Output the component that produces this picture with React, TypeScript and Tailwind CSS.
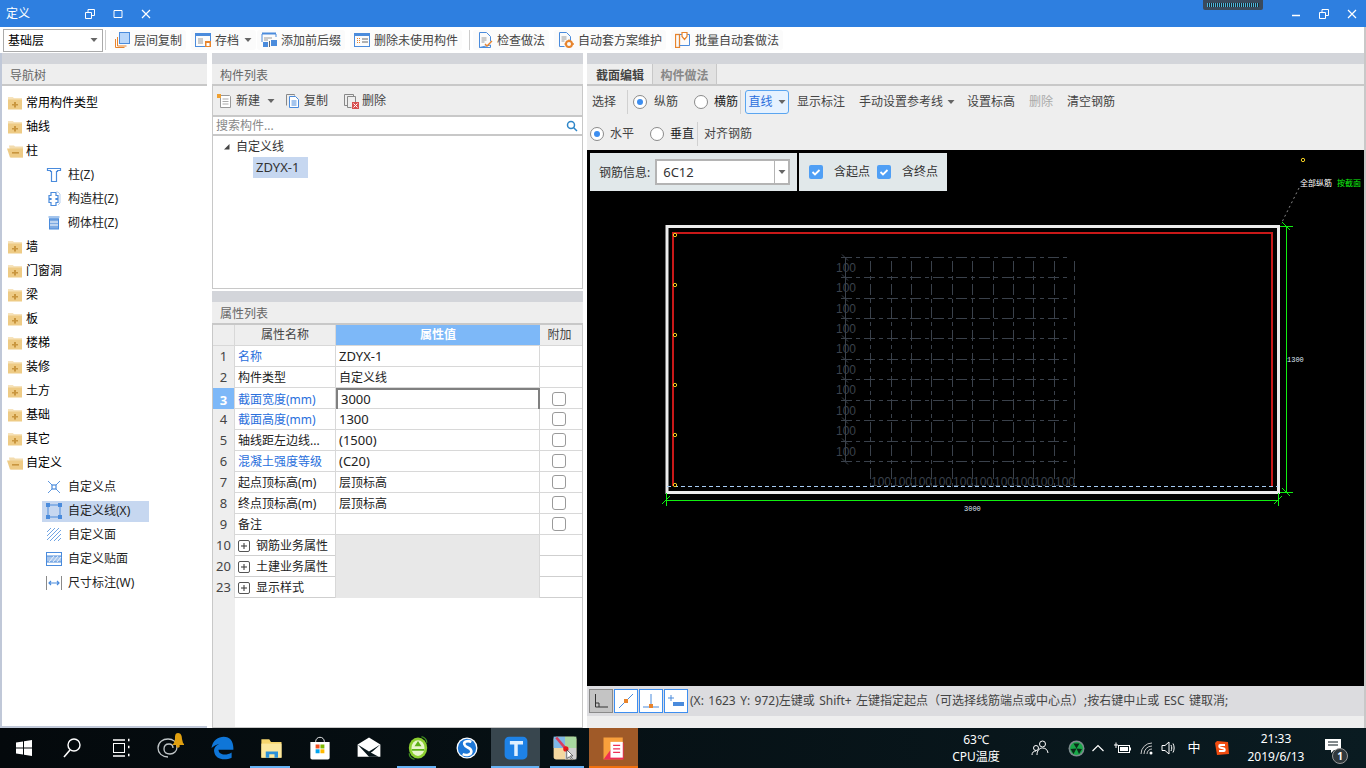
import React from 'react';

const FONT = "[font-family:'Noto_Sans','Noto_Sans_CJK_SC',sans-serif]";

// 导航树の折りたたみフォルダ
const FolderClosed = () => (
  <svg width="16" height="14" viewBox="0 0 16 14" className="shrink-0">
    <path d="M1 1.500h5l1 1h8v11H1z" fill="#eecb85" />
    <path d="M1 1.500h5l1 1h8v1H1z" fill="#f6e2b8" />
    <path d="M7 6h2v2h2v1.600H9v2H7v-2H5V8h2z" fill="#c9963f" />
  </svg>
);

const FolderOpen = () => (
  <svg width="17" height="14" viewBox="0 0 17 14" className="shrink-0">
    <path d="M2 1.500h5l1 1h8v11H4z" fill="#f3dcae" />
    <path d="M0 4.500h16v9H3z" fill="#eecb85" />
    <rect x="5" y="8" width="7" height="1.600" fill="#c9963f" />
  </svg>
);

const Sub = ({ children }: { children: React.ReactNode }) => (
  <svg width="16" height="16" viewBox="0 0 16 16" fill="none" stroke="#4a8bdc" className="shrink-0">
    {children}
  </svg>
);

const navIcons: Record<string, React.ReactNode> = {
  col: <Sub><path d="M1.500 1.500h13v2h-3v1h-1v10h-5v-10h-1v-1h-3z" strokeWidth="1.200" /></Sub>,
  gz: <Sub><path d="M5 1.500h5v3H12v3h-2v1h2v3h-2v3H5v-3H3v-3h2v-1H3v-3h2z" strokeWidth="1.200" /><path d="M10 1h2l2 2v9l-2 2" stroke="#b6d0f0" /></Sub>,
  qt: <Sub><path d="M2.500 2h11M3 4h10" strokeWidth="1.200" /><rect x="3.500" y="4" width="9" height="10" fill="#7eaae2" stroke="#4a8bdc" /><path d="M4 7h8M4 10h8" stroke="#fff" /></Sub>,
  point: <Sub><path d="M2 2l4 4M14 2l-4 4M2 14l4-4M14 14l-4-4" strokeWidth="0.900" /><rect x="6" y="6" width="4" height="4" strokeWidth="1.200" /></Sub>,
  line: <Sub><rect x="2" y="2" width="12" height="12" /><rect x="0.500" y="0.500" width="3" height="3" fill="#4a8bdc" /><rect x="12.500" y="0.500" width="3" height="3" fill="#4a8bdc" /><rect x="0.500" y="12.500" width="3" height="3" fill="#4a8bdc" /><rect x="12.500" y="12.500" width="3" height="3" fill="#4a8bdc" /></Sub>,
  face: <Sub><path d="M1 5l4-4M1 9l8-8M1 13L13 1M4 14L15 3M8 14l7-7M12 14l3-3" strokeWidth="0.800" /></Sub>,
  tie: <Sub><rect x="0.500" y="1.500" width="15" height="13" /><rect x="1" y="5" width="14" height="6" fill="#a8c6ec" stroke="none" /><path d="M0.500 5h15M0.500 11h15" /><path d="M3 11l5-6M7 11l5-6M11 11l4-5" stroke="#fff" strokeWidth="0.800" /></Sub>,
  dim: <Sub><path d="M0.500 1v14M15.500 1v14" stroke="#8a8a8a" /><path d="M3 8h10M5 6L3 8l2 2M11 6l2 2-2 2" strokeWidth="1.200" /></Sub>,
};

type NavItem = { label: string; open?: boolean; sub?: { label: string; icon: string; active?: boolean }[] };

const navTree: NavItem[] = [
  { label: '常用构件类型' },
  { label: '轴线' },
  {
    label: '柱',
    open: true,
    sub: [
      { label: '柱(Z)', icon: 'col' },
      { label: '构造柱(Z)', icon: 'gz' },
      { label: '砌体柱(Z)', icon: 'qt' },
    ],
  },
  { label: '墙' },
  { label: '门窗洞' },
  { label: '梁' },
  { label: '板' },
  { label: '楼梯' },
  { label: '装修' },
  { label: '土方' },
  { label: '基础' },
  { label: '其它' },
  {
    label: '自定义',
    open: true,
    sub: [
      { label: '自定义点', icon: 'point' },
      { label: '自定义线(X)', icon: 'line', active: true },
      { label: '自定义面', icon: 'face' },
      { label: '自定义贴面', icon: 'tie' },
      { label: '尺寸标注(W)', icon: 'dim' },
    ],
  },
];

const Arrow = () => (
  <svg width="8" height="4" viewBox="0 0 8 4" className="shrink-0">
    <path d="M0.500 0h7L4 4z" fill="#666" />
  </svg>
);

const Tb = ({ children }: { children: React.ReactNode }) => (
  <svg width="16" height="16" viewBox="0 0 16 16" fill="none" className="shrink-0">
    {children}
  </svg>
);

const toolIcons = {
  copy: <Tb><path d="M3.500 5v9h9" stroke="#e8842c" /><path d="M1.500 7v8.500h9" stroke="#e8842c" /><rect x="5.500" y="0.500" width="10" height="11" fill="#b8d6fa" stroke="#4a8bdc" /></Tb>,
  save: <Tb><rect x="0.500" y="1.500" width="15" height="13" stroke="#4a8bdc" /><rect x="1" y="2" width="14" height="2" fill="#4a8bdc" /><path d="M3 7h5M3 9h5M3 11h5" stroke="#9a9a9a" /><rect x="10" y="9" width="6" height="6" fill="#e8842c" /><rect x="11.500" y="11" width="3" height="3" fill="#fff" /></Tb>,
  prefix: <Tb><path d="M1 1.500h14" stroke="#4a8bdc" strokeWidth="2" /><path d="M1 2v8M15 2v3" stroke="#4a8bdc" /><path d="M3 6h8M3 8h4" stroke="#9a9a9a" /><rect x="2" y="10" width="5" height="5" fill="#4a8bdc" /><rect x="10" y="8" width="6" height="6" fill="#4a8bdc" /><path d="M8.500 9v6" stroke="#666" /></Tb>,
  purge: <Tb><rect x="0.500" y="1.500" width="15" height="13" stroke="#4a8bdc" /><rect x="1" y="2" width="14" height="2" fill="#4a8bdc" /><path d="M3 6h1v1H3zM5 6h1v1H5zM3 8h1v1H3zM5 8h1v1H5zM3 10h1v1H3zM5 10h1v1H5z" fill="#e8842c" /><path d="M8 7h6M8 10h6" stroke="#666" /></Tb>,
  check: <Tb><path d="M2.500 0.500h7l4 4v5M13.500 13v2.500h-11z" stroke="#4a8bdc" /><path d="M2.500 0.500v15" stroke="#4a8bdc" /><path d="M4.500 6h5M4.500 8h5M4.500 10h3" stroke="#9a9a9a" /><path d="M8 12l2 2 5-5" stroke="#e8842c" strokeWidth="1.400" /></Tb>,
  scheme: <Tb><path d="M1.500 0.500h7l4 4v5M1.500 0.500v14h5" stroke="#4a8bdc" /><path d="M3.500 5h5M3.500 7h5M3.500 9h3" stroke="#9a9a9a" /><circle cx="11" cy="12" r="3" stroke="#e8842c" strokeWidth="2" /><path d="M11 7.500v1.500M11 15v1M6.500 12h1.500M14 12h2" stroke="#e8842c" strokeWidth="1.500" /></Tb>,
  batch: <Tb><rect x="0.500" y="2.500" width="4" height="13" stroke="#e8842c" strokeWidth="1.300" /><path d="M4.500 2.500h10v11h-10" stroke="#4a8bdc" /><path d="M7 0.500h5v4l-2.500 3-2.500-3z" fill="#fff" stroke="#e8842c" strokeWidth="1.200" /></Tb>,
};

const topTools: { label: string; icon: keyof typeof toolIcons; cls: string; arrow?: boolean }[] = [
  { label: '层间复制', icon: 'copy', cls: 'ml-[4px]' },
  { label: '存档', icon: 'save', cls: 'ml-[5px]', arrow: true },
  { label: '添加前后缀', icon: 'prefix', cls: 'ml-[1px]' },
  { label: '删除未使用构件', icon: 'purge', cls: 'ml-[5px]' },
  { label: '检查做法', icon: 'check', cls: 'ml-[3px]' },
  { label: '自动套方案维护', icon: 'scheme', cls: 'ml-[5px]' },
  { label: '批量自动套做法', icon: 'batch', cls: 'ml-[5px]' },
];

const Cb = () => <span className="block h-[14px] w-[14px] rounded-[3px] border border-[#9a9a9a] bg-white" />;

const Radio = ({ on, cls }: { on?: boolean; cls: string }) => (
  <span className={`flex h-[14px] w-[14px] shrink-0 items-center justify-center rounded-full border border-[#8a8a8a] bg-white ${cls}`}>
    {on && <span className="h-[6px] w-[6px] rounded-full bg-[#3d8ef0]" />}
  </span>
);

const CheckBlue = () => (
  <svg width="14" height="14" viewBox="0 0 14 14" className="shrink-0">
    <rect width="14" height="14" rx="2" fill="#4f9ff5" />
    <path d="M3.500 7l2.500 2.500 4.500-4.500" fill="none" stroke="#fff" strokeWidth="1.800" />
  </svg>
);

const Plus = () => (
  <span className="mr-[6px] flex h-[12px] w-[12px] shrink-0 items-center justify-center rounded-[2px] border border-[#555] text-[10px] leading-none">
    <svg width="8" height="8" viewBox="0 0 8 8"><path d="M4 1v6M1 4h6" stroke="#333" /></svg>
  </span>
);

type Row = { n: number; name: string; value?: string; latin?: boolean; blue?: boolean; check?: boolean; selected?: boolean; group?: boolean };

const rows: Row[] = [
  { n: 1, name: '名称', value: 'ZDYX-1', latin: true, blue: true },
  { n: 2, name: '构件类型', value: '自定义线' },
  { n: 3, name: '截面宽度(mm)', value: '3000', latin: true, blue: true, check: true, selected: true },
  { n: 4, name: '截面高度(mm)', value: '1300', latin: true, blue: true, check: true },
  { n: 5, name: '轴线距左边线...', value: '(1500)', latin: true, check: true },
  { n: 6, name: '混凝土强度等级', value: '(C20)', latin: true, blue: true, check: true },
  { n: 7, name: '起点顶标高(m)', value: '层顶标高', check: true },
  { n: 8, name: '终点顶标高(m)', value: '层顶标高', check: true },
  { n: 9, name: '备注', check: true },
  { n: 10, name: '钢筋业务属性', group: true },
  { n: 20, name: '土建业务属性', group: true },
  { n: 23, name: '显示样式', group: true },
];

const hLines = [257.5, 277.5, 298.5, 318.5, 338.5, 359.5, 379.5, 400.5, 420.5, 441.5, 461.5];
const vLines = [870.5, 891.5, 911.5, 931.5, 952.5, 972.5, 993.5, 1013.5, 1033.5, 1054.5, 1074.5];
const pins = [235, 285, 335, 385, 435, 485];

// 断面图
const Drawing = () => (
  <svg width="777" height="536" viewBox="587 150 777 536" className="block">
    <rect x="587" y="150" width="777" height="536" fill="#000" />
    <g stroke="#3a414b" fill="none">
      {hLines.map((y) => (
        <path key={y} d={`M841 ${y}H1071`} strokeDasharray="11 4 4 4" />
      ))}
      {vLines.map((x) => (
        <path key={x} d={`M${x} 261V490`} strokeDasharray="11 4 4 4" />
      ))}
      <path d="M845.500 257V461" />
      {hLines.map((y) => (
        <path key={`t${y}`} d={`M842 ${y - 3}l6 6`} />
      ))}
    </g>
    <g fill="#3a414b" fontSize="12" fontFamily="'Liberation Sans', sans-serif">
      {hLines.slice(0, 10).map((y) => (
        <text key={y} x="836" y={y + 14}>100</text>
      ))}
      {vLines.slice(0, 10).map((x) => (
        <text key={x} x={x + 0.5} y="486">100</text>
      ))}
    </g>
    <path d="M1299 188L1281 224" stroke="#8a8a8a" strokeDasharray="2 3" />
    <rect x="667" y="226.500" width="611.500" height="266" fill="none" stroke="#ececec" strokeWidth="3" />
    <path d="M673 486V233H1272V486" fill="none" stroke="#c81818" strokeWidth="2" />
    <path d="M667 486.500H1278" stroke="#a6ccf4" strokeDasharray="4 3" />
    <g fill="none" stroke="#f5d020">
      {pins.map((y) => (
        <circle key={y} cx="675" cy={y} r="1.700" />
      ))}
      <circle cx="1303" cy="160" r="1.700" />
    </g>
    <g stroke="#10f010" fill="none">
      <path d="M666 500.500H1278M666.500 493V506M1278.500 493V506M662 504l8-8M1274 504l8-8" />
      <path d="M1286.500 226V492M1280 226.500H1293M1280 492.500H1293M1282 222l8 8M1282 488l8 8" />
    </g>
    <text x="964" y="511" fontSize="7" fill="#dfe8f4" fontFamily="'Liberation Mono', monospace">3000</text>
    <text x="1287" y="362" fontSize="7" fill="#dfe8f4" fontFamily="'Liberation Mono', monospace">1300</text>
    <text x="1300" y="186" fontSize="8" fill="#ffffff" fontFamily="'Noto Sans CJK SC', sans-serif">全部纵筋</text>
    <text x="1337" y="186" fontSize="8" fill="#10f010" fontFamily="'Noto Sans CJK SC', sans-serif">按截面</text>
  </svg>
);

const Snap = ({ children, active }: { children: React.ReactNode; active?: boolean }) => (
  <span className={`flex h-[24px] w-[24px] items-center justify-center border ${active ? 'border-[#8a8a8a] bg-[#c4c4c4]' : 'border-[#3d8ef0] bg-white'}`}>
    <svg width="18" height="18" viewBox="0 0 18 18" fill="none">{children}</svg>
  </span>
);

const TaskIcon = ({ children, cls, under, app }: { children: React.ReactNode; cls?: string; under?: string; app?: boolean }) => (
  <div className={`relative flex h-full shrink-0 items-center justify-center ${app ? 'w-[49px]' : 'w-[48px]'} ${cls ?? ''}`}>
    <svg width={app ? 28 : 32} height={app ? 28 : 32} viewBox="0 0 32 32" fill="none">{children}</svg>
    {under && <span className={`absolute bottom-0 h-[2px] ${under}`} />}
  </div>
);

const Tray = ({ children, cls }: { children: React.ReactNode; cls: string }) => (
  <div className={`flex shrink-0 items-center justify-center ${cls}`}>{children}</div>
);

const Head = ({ children }: { children: React.ReactNode }) => (
  <div className="flex h-[22px] items-center border-b-2 border-[#c8c8c8] bg-[#eee] pl-[8px] pt-[4px] text-[#666]">{children}</div>
);

export default function App() {
  return (
    <div className={`flex h-[768px] w-[1366px] flex-col overflow-hidden bg-white text-[12px] text-[#333] ${FONT}`}>
      {/* タイトルバー */}
      <div className="relative flex h-[27px] shrink-0 items-center bg-[#2e7fe0] text-white">
        <span className="ml-[6px] pt-[1px] text-[12px]">定义</span>
        <svg width="10" height="10" viewBox="0 0 10 10" fill="none" stroke="#fff" className="ml-[55px]">
          <path d="M0.500 3.500h6v6h-6zM3 3V0.500h6.500v6H7" />
        </svg>
        <svg width="10" height="10" viewBox="0 0 10 10" fill="none" stroke="#fff" className="ml-[18px]">
          <path d="M1 1.500h8v7H1z" />
        </svg>
        <svg width="10" height="10" viewBox="0 0 10 10" fill="none" stroke="#fff" className="ml-[18px]">
          <path d="M1 1l8 8M9 1l-8 8" strokeWidth="1.200" />
        </svg>
        <div className="absolute left-[1203px] top-0 flex h-[10px] w-[60px] items-center justify-center rounded-b-[2px] bg-[#3a4a5c]">
          <span className="h-[4px] w-[52px] bg-[repeating-linear-gradient(90deg,#4fb4d8_0,#4fb4d8_1px,#1c2630_1px,#1c2630_2px)]" />
        </div>
        <svg width="10" height="10" viewBox="0 0 10 10" fill="none" stroke="#fff" className="ml-auto">
          <path d="M1 6.500h8" strokeWidth="1.500" />
        </svg>
        <svg width="10" height="10" viewBox="0 0 10 10" fill="none" stroke="#fff" className="ml-[18px]">
          <path d="M0.500 3.500h6v6h-6zM3 3V0.500h6.500v6H7" />
        </svg>
        <svg width="10" height="10" viewBox="0 0 10 10" fill="none" stroke="#fff" className="ml-[18px] mr-[9px]">
          <path d="M1 1l8 8M9 1l-8 8" strokeWidth="1.200" />
        </svg>
      </div>

      {/* ツールバー */}
      <div className="flex h-[26px] shrink-0 items-center border-r-2 border-[#c8c8c8] bg-white">
        <div className="ml-[3px] flex h-[23px] w-[100px] items-center justify-between border border-[#aaa] px-[4px] text-black">
          <span className="pt-[1px]">基础层</span>
          <Arrow />
        </div>
        <span className="ml-[2px] h-[20px] w-px bg-[#ccc]" />
        {topTools.map((t, i) => (
          <React.Fragment key={t.label}>
            {i === 4 && <span className="ml-[7px] h-[20px] w-px bg-[#ccc]" />}
            <div className={`flex h-[20px] items-center gap-[4px] rounded-[3px] bg-[#fbfbfb] px-[4px] text-[#444] ${t.cls}`}>
              {toolIcons[t.icon]}
              <span className="pt-[1px]">{t.label}</span>
              {t.arrow && <span className="ml-[1px]"><Arrow /></span>}
            </div>
          </React.Fragment>
        ))}
      </div>

      <div className="flex h-[675px] shrink-0 bg-white">
        {/* 左ストリップ + 导航树 */}
        <div className="w-[2px] bg-[#c0c8d8]" />
        <div className="flex w-[205px] flex-col border-b-2 border-[#c0c8d8]">
          <div className="h-[11px] bg-[#d3d5da]" />
          <Head>导航树</Head>
          <div className="flex-1 pt-[5px] text-black">
            {navTree.map((n) => (
              <React.Fragment key={n.label}>
                <div className="flex h-[24px] items-center gap-[1px] pl-[5px]">
                  <span className="flex w-[18px]">{n.open ? <FolderOpen /> : <FolderClosed />}</span>
                  <span>{n.label}</span>
                </div>
                {n.sub?.map((s) => (
                  <div key={s.label} className="flex h-[24px] items-center pl-[40px]">
                    <div className={`flex h-[21px] items-center gap-[6px] pl-[4px] ${s.active ? 'w-[107px] bg-[#c6d7f0]' : ''}`}>
                      {navIcons[s.icon]}
                      <span className="text-[#222]">{s.label}</span>
                    </div>
                  </div>
                ))}
              </React.Fragment>
            ))}
          </div>
        </div>

        <div className="w-[5px]" />

        {/* 构件列表 / 属性列表 */}
        <div className="flex w-[371px] flex-col">
          <div className="h-[11px] bg-[#d3d5da]" />
          <Head>构件列表</Head>
          <div className="flex h-[203px] flex-col border-x border-b border-[#c8c8c8]">
            <div className="flex h-[29px] shrink-0 items-center bg-[#eee] pl-[4px] text-[#444]">
              <svg width="16" height="16" viewBox="0 0 16 16" fill="none">
                <path d="M3.500 2.500h9l1 1v11h-10z" fill="#fff" stroke="#999" />
                <path d="M5.500 6h6M5.500 8.500h6M5.500 11h6" stroke="#aaa" />
                <path d="M0 1h4v4H0z" fill="#f0a030" />
              </svg>
              <span className="ml-[3px]">新建</span>
              <span className="ml-[7px]"><Arrow /></span>
              <svg width="16" height="16" viewBox="0 0 16 16" fill="none" stroke="#4a8bdc" className="ml-[10px]">
                <path d="M1.500 1.500h8v1" stroke="#888" />
                <path d="M1.500 1.500v11" stroke="#888" />
                <path d="M4.500 3.500h6l3 3v8h-9z" fill="#fff" />
                <path d="M6.500 8h5M6.500 10h5M6.500 12h5" />
              </svg>
              <span className="ml-[3px]">复制</span>
              <svg width="16" height="16" viewBox="0 0 16 16" fill="none" stroke="#888" className="ml-[15px]">
                <path d="M1.500 1.500h9v2M1.500 1.500v11h3" />
                <path d="M4.500 3.500h8v7M4.500 3.500v11h4" />
                <rect x="9" y="9" width="7" height="7" fill="#d85050" stroke="none" />
                <path d="M10.500 10.500l4 4M14.500 10.500l-4 4" stroke="#fff" />
              </svg>
              <span className="ml-[3px]">删除</span>
            </div>
            <div className="flex h-[21px] shrink-0 items-center justify-between border-y-2 border-[#c8c8c8] bg-white pl-[3px] pr-[4px] text-[#888]">
              <span>搜索构件...</span>
              <svg width="12" height="12" viewBox="0 0 12 12" fill="none" stroke="#2e86c8" strokeWidth="1.500">
                <circle cx="5" cy="5" r="3.500" />
                <path d="M7.500 7.500l3.500 3.500" />
              </svg>
            </div>
            <div className="flex-1 text-[#333]">
              <div className="flex h-[21px] items-center pl-[10px]">
                <svg width="7" height="7" viewBox="0 0 7 7"><path d="M6.500 1v5.500H1z" fill="#444" /></svg>
                <span className="ml-[6px]">自定义线</span>
              </div>
              <div className="ml-[40px] flex h-[21px] w-[55px] items-center bg-[#c6d7f0] pl-[3px] text-[13px]">ZDYX-1</div>
            </div>
          </div>
          <div className="mt-[2px] h-[11px] bg-[#d3d5da]" />
          <div className="flex h-[23px] items-center border-b-2 border-[#c8c8c8] bg-[#eee] pl-[8px] pt-[3px] text-[#666]">属性列表</div>
          <div className="flex h-[403px] flex-col border border-t-0 border-[#c8c8c8]">
            <div className="grid h-[21px] shrink-0 grid-cols-[22px_101px_204px_41px] border-b border-[#d8d8d8] bg-[#eee] text-[#444]">
              <span className="border-r border-[#d8d8d8]" />
              <span className="flex items-center justify-center border-r border-[#d8d8d8]">属性名称</span>
              <span className="flex items-center justify-center bg-[#7db8f8] font-bold text-white">属性值</span>
              <span className="flex items-center justify-center pr-[2px]">附加</span>
            </div>
            {rows.map((r) => (
              <div key={r.n} className={`grid h-[21px] shrink-0 grid-cols-[22px_101px_204px_41px] border-b bg-white text-[#222] ${r.group ? 'border-[#cfcfcf]' : 'border-[#d8d8d8]'}`}>
                <span className={`flex items-center justify-center border-r border-[#d8d8d8] pt-px text-[13px] ${r.selected ? 'bg-[#7db8f8] font-bold text-white' : 'bg-[#eee] text-[#444]'}`}>{r.n}</span>
                <span className={`flex items-center whitespace-nowrap border-r border-[#d8d8d8] pl-[3px] pt-px ${r.blue ? 'text-[#2a6fdc]' : ''}`}>
                  {r.group && <Plus />}
                  {r.name}
                </span>
                <span className={`flex items-center pl-[3px] ${r.latin ? 'text-[13px]' : ''} ${r.group ? 'bg-[#e8e8e8]' : ''} ${r.selected ? 'border-2 border-[#808080]' : 'border-r border-[#d8d8d8] pt-px'}`}>{r.value}</span>
                <span className="flex items-center justify-center pb-[1px] pr-[4px]">{r.check && <Cb />}</span>
              </div>
            ))}
            <div className="flex-1">
              <div className="h-full w-[22px] bg-[#eee]" />
            </div>
          </div>
        </div>

        <div className="w-[4px]" />

        {/* 截面编辑 */}
        <div className="flex w-[777px] flex-col">
          <div className="h-[11px] bg-[#d3d5da]" />
          <div className="flex h-[22px] items-stretch border-b-2 border-[#c8c8c8] bg-[#eee] pl-[1px]">
            <span className="flex w-[64px] items-center justify-center pt-[4px] font-bold text-[#444]">截面编辑</span>
            <span className="flex w-[65px] items-center justify-center border-x border-[#c8c8c8] bg-[#e2e2e2] pt-[4px] font-bold text-[#888]">构件做法</span>
          </div>
          <div className="flex h-[32px] items-center bg-[#eee] text-[#444]">
            <span className="ml-[5px]">选择</span>
            <span className="ml-[11px] h-[24px] w-px bg-[#d0d0d0]" />
            <Radio on cls="ml-[5px]" />
            <span className="ml-[7px]">纵筋</span>
            <Radio cls="ml-[16px]" />
            <span className="ml-[6px] text-[#222]">横筋</span>
            <span className="ml-[2px] h-[24px] w-px bg-[#d0d0d0]" />
            <div className="ml-[4px] flex h-[24px] w-[44px] items-center justify-center gap-[5px] rounded-[3px] border border-[#5aa5f0] bg-[#e6f2ff] text-[#2a6fdc]">
              <span>直线</span>
              <Arrow />
            </div>
            <span className="ml-[8px]">显示标注</span>
            <span className="ml-[14px]">手动设置参考线</span>
            <span className="ml-[4px]"><Arrow /></span>
            <span className="ml-[12px]">设置标高</span>
            <span className="ml-[14px] text-[#aaa]">删除</span>
            <span className="ml-[14px]">清空钢筋</span>
          </div>
          <div className="flex h-[32px] items-center bg-[#eee] text-[#444]">
            <Radio on cls="ml-[3px]" />
            <span className="ml-[6px]">水平</span>
            <Radio cls="ml-[16px]" />
            <span className="ml-[6px] text-[#222]">垂直</span>
            <span className="ml-[3px] h-[24px] w-px bg-[#d0d0d0]" />
            <span className="ml-[6px]">对齐钢筋</span>
          </div>
          <div className="relative h-[536px] shrink-0">
            <Drawing />
            <div className="absolute left-[3px] top-[3px] flex h-[38px] w-[207px] items-center bg-[#e1e8ea] pl-[9px] text-[#333]">
              <span className="pt-[2px]">钢筋信息:</span>
              <div className="ml-[5px] flex h-[26px] w-[135px] items-stretch border-2 border-[#b4b4b4] bg-white">
                <span className="flex flex-1 items-center pl-[6px] pt-[2px] text-[13px]">6C12</span>
                <span className="flex w-[14px] items-center justify-center border-l border-[#b4b4b4]"><Arrow /></span>
              </div>
            </div>
            <div className="absolute left-[212px] top-[3px] flex h-[38px] w-[148px] items-center bg-[#e1e8ea] pl-[10px] text-[#333]">
              <CheckBlue />
              <span className="ml-[11px]">含起点</span>
              <span className="ml-[7px]"><CheckBlue /></span>
              <span className="ml-[11px]">含终点</span>
            </div>
          </div>
          <div className="flex h-[30px] items-center gap-px bg-[#dcdcdf] pl-[2px] text-[#444]">
            <Snap active>
              <path d="M3.500 2v13H16M3.500 11H7v4" stroke="#333" />
            </Snap>
            <Snap>
              <path d="M2 16L16 2" stroke="#4a8bdc" />
              <rect x="7" y="7" width="4" height="4" fill="#e8842c" />
            </Snap>
            <Snap>
              <path d="M9 2v13M1 15h16" stroke="#4a8bdc" />
              <rect x="7" y="12" width="4" height="4" fill="#e8842c" />
            </Snap>
            <Snap>
              <path d="M1 6h6M4 3v6" stroke="#4a8bdc" />
              <rect x="6" y="10" width="11" height="4" fill="#4a8bdc" />
            </Snap>
            <span className="ml-[1px] whitespace-nowrap [word-spacing:1.3px]">(X: 1623 Y: 972)左键或 Shift+ 左键指定起点（可选择线筋端点或中心点）;按右键中止或 ESC 键取消;</span>
          </div>
          <div className="flex-1 bg-[#eee]" />
        </div>
        <div className="w-[2px] bg-[#c8c8c8]" />
      </div>

      {/* タスクバー */}
      <div className="flex h-[40px] shrink-0 items-center bg-linear-to-r from-[#04090c] to-[#0a1b21] text-white">
        <TaskIcon>
          <path d="M8 10.500l7-1v6H8zM16 9.300l8-1.200v7.400h-8zM8 16.500h7v6l-7-1zM16 16.500h8V24l-8-1.200z" fill="#fff" />
        </TaskIcon>
        <TaskIcon>
          <circle cx="18" cy="13" r="6" stroke="#fff" strokeWidth="1.400" />
          <path d="M14 18l-6 7" stroke="#fff" strokeWidth="1.600" />
        </TaskIcon>
        <TaskIcon>
          <path d="M9 8h12M9 24h12" stroke="#fff" strokeWidth="1.300" />
          <rect x="9.500" y="11.500" width="11" height="9" stroke="#fff" />
          <path d="M24 8h1.500M24 15h1.500M24 23h1.500" stroke="#fff" strokeWidth="2.400" />
        </TaskIcon>
        <TaskIcon>
          <path d="M16 25c-6 0-10-4-10-9 0-6 5-9 10-9 5 0 9 3 9 8 0 4-3 7-7 7-4 0-6-2-6-5 0-3 2-5 5-5s4 2 4 4" stroke="#c0c6c8" strokeWidth="1.300" />
          <path d="M26 1c3 0 4 3 4 6l1 4 2 2H20l2-2 1-4c0-3 0-6 3-6z" fill="#e0a010" />
          <circle cx="26" cy="14" r="1.800" fill="#e0a010" />
        </TaskIcon>
        <div className="ml-[5px]" />
        <TaskIcon app>
          <path d="M4 16C5 7 12 3 18 3c7 0 11 5 11 13v2H12c0 6 9 7 15 3v6c-8 4-19 2-20-7-.5-4 2-7 6-9-3 1-6 2-9 5z" fill="#0f76d8" />
        </TaskIcon>
        <TaskIcon app under="left-[4px] w-[40px] bg-[#66b2f5]">
          <path d="M5 6h9l2 3h12v18H5z" fill="#f5d46c" />
          <path d="M5 11h23v16H5z" fill="#fbe79e" />
          <path d="M10 20h14v7h-4v-4h-6v4h-4z" fill="#2a90d8" />
        </TaskIcon>
        <TaskIcon app>
          <path d="M11 9c0-7 10-7 10 0" stroke="#fff" />
          <path d="M5 9h22v18a2 2 0 0 1-2 2H7a2 2 0 0 1-2-2z" fill="#fff" />
          <rect x="11" y="12" width="4.500" height="4.500" fill="#f25022" />
          <rect x="16.500" y="12" width="4.500" height="4.500" fill="#7fba00" />
          <rect x="11" y="17.500" width="4.500" height="4.500" fill="#00a4ef" />
          <rect x="16.500" y="17.500" width="4.500" height="4.500" fill="#ffb900" />
        </TaskIcon>
        <TaskIcon app>
          <path d="M3 12L16 4l13 8v14H3z" fill="#fff" />
          <path d="M3 12l13 8 13-8-9 8-2 1 9 5H16z" fill="#07151a" />
        </TaskIcon>
        <TaskIcon app under="left-[4px] w-[39px] bg-[#66b2f5]">
          <ellipse cx="16" cy="16" rx="10.500" ry="12" fill="#8ccf30" />
          <ellipse cx="16" cy="16" rx="7.500" ry="9" fill="#e8f5cc" />
          <path d="M16 8l4 6h-8zM9 17h14v2H9z" fill="#5cb018" />
          <path d="M20 3c4 1 6 4 6 7M12 29c-4-1-6-4-6-7" stroke="#3d8a20" strokeWidth="1.500" />
        </TaskIcon>
        <TaskIcon app>
          <circle cx="16" cy="16" r="12" fill="#fff" />
          <circle cx="16" cy="16" r="10.500" fill="#1e78d8" />
          <path d="M21 9c-5-2-9 0-8 3 1 4 8 3 8 8 0 4-6 5-10 3" stroke="#fff" strokeWidth="3" />
        </TaskIcon>
        <TaskIcon app cls="bg-[#38464e]" under="left-0 w-[48px] bg-[#66b2f5]">
          <rect x="3" y="3" width="26" height="26" rx="5" fill="#1e82e6" />
          <path d="M9 8h15v4h-6v13h-4V12H9z" fill="#dff0ff" />
        </TaskIcon>
        <TaskIcon app under="left-[10px] w-[34px] bg-[#66b2f5]">
          <rect x="3" y="3" width="26" height="26" rx="3" fill="#f4d8a0" />
          <path d="M3 3h13v13H3z" fill="#7fb8e8" />
          <path d="M16 3h13v13H16z" fill="#a8d8a0" />
          <path d="M16 16h13v13H16z" fill="#d0d0d0" />
          <path d="M6 4l11 13" stroke="#d84060" strokeWidth="3" />
          <circle cx="17" cy="17" r="3" fill="#e81818" />
          <path d="M18 18v10l3-2 3 4 1-1-3-4h3z" fill="#fff" stroke="#222" strokeWidth="0.700" />
        </TaskIcon>
        <TaskIcon app cls="bg-[#a05a28]" under="left-0 w-[49px] bg-[#f07010]">
          <path d="M4 4h22v25H4z" fill="#f9a03c" />
          <path d="M4 29L18 10h9v19z" fill="#ee2f55" />
          <rect x="12" y="9" width="14" height="18" fill="#fff" />
          <path d="M15 13h8M15 17h8M15 21h8" stroke="#ee2f55" strokeWidth="1.600" />
        </TaskIcon>

        <div className="flex-1" />

        <div className="flex w-[52px] shrink-0 flex-col items-center text-[12px] leading-[17px]">
          <span>63℃</span>
          <span>CPU温度</span>
        </div>
        <Tray cls="ml-[26px] w-[24px]">
          <svg width="18" height="18" viewBox="0 0 18 18" fill="none" stroke="#fff">
            <circle cx="11.500" cy="5" r="3" />
            <path d="M6 16c0-4 2-7 5.500-7s5 2 5.500 5" />
            <circle cx="5" cy="9" r="2.500" />
            <path d="M1 16c0-2.500 1.500-4 4-4" />
          </svg>
        </Tray>
        <Tray cls="ml-[12px] w-[24px]">
          <svg width="17" height="17" viewBox="0 0 17 17">
            <circle cx="8.500" cy="8.500" r="8" fill="#7c8a8c" />
            <circle cx="8.500" cy="8.500" r="6.500" fill="#18a848" />
            <path d="M8.500 8.500L5.500 3.500h6zM8.500 8.500l5.500.5-3 5zM8.500 8.500l-3 5.500-3-5z" fill="#0a2a18" />
          </svg>
        </Tray>
        <Tray cls="w-[20px]">
          <svg width="12" height="8" viewBox="0 0 12 8" fill="none" stroke="#fff" strokeWidth="1.200"><path d="M0.500 7L6 1.500 11.500 7" /></svg>
        </Tray>
        <Tray cls="w-[28px]">
          <svg width="17" height="12" viewBox="0 0 17 12" fill="none" stroke="#fff">
            <rect x="4.500" y="3.500" width="11" height="7" />
            <rect x="6" y="5" width="8" height="4" fill="#fff" stroke="none" />
            <path d="M16.500 5.500v3M0 3h4M2 0.500V3M2 3v3" />
          </svg>
        </Tray>
        <Tray cls="w-[22px]">
          <svg width="14" height="13" viewBox="0 0 14 13" fill="none" stroke="#c8c8c8">
            <path d="M1 12A11 11 0 0 1 12 1M4 12a8 8 0 0 1 8-8M7 12a5 5 0 0 1 5-5" />
            <circle cx="11" cy="11" r="1.500" fill="#fff" stroke="none" />
          </svg>
        </Tray>
        <Tray cls="w-[22px]">
          <svg width="16" height="14" viewBox="0 0 16 14" fill="none" stroke="#fff">
            <path d="M1 4.500h3L8 1v12L4 9.500H1z" />
            <path d="M10 4c1 2 1 4 0 6M12 2.500c1.500 3 1.500 6 0 9" />
          </svg>
        </Tray>
        <Tray cls="w-[28px] text-[13px]">中</Tray>
        <Tray cls="w-[28px]">
          <svg width="16" height="16" viewBox="0 0 16 16">
            <path d="M3 1l11 1 1 12-12 1-2-12z" fill="#f04c10" />
            <path d="M11 5H6c-1 0-1 2 0 2.500l4 1c1 .5 1 2.500 0 2.500H5" fill="none" stroke="#fff" strokeWidth="2" />
          </svg>
        </Tray>
        <div className="flex w-[80px] shrink-0 flex-col items-center text-[12px] leading-[18px]">
          <span>21:33</span>
          <span>2019/6/13</span>
        </div>
        <Tray cls="relative h-full w-[34px]">
          <svg width="16" height="15" viewBox="0 0 16 15" className="mb-[4px]">
            <path d="M0 0h16v11H9l-3 3v-3H0z" fill="#fff" />
            <path d="M3 3h10M3 6h10" stroke="#07151a" />
          </svg>
          <span className="absolute bottom-[4px] right-[2px] flex h-[16px] w-[16px] items-center justify-center rounded-full border border-[#999] bg-[#30383c] text-[10px] font-bold leading-none">1</span>
        </Tray>
        <div className="w-[16px]" />
      </div>
    </div>
  );
}
